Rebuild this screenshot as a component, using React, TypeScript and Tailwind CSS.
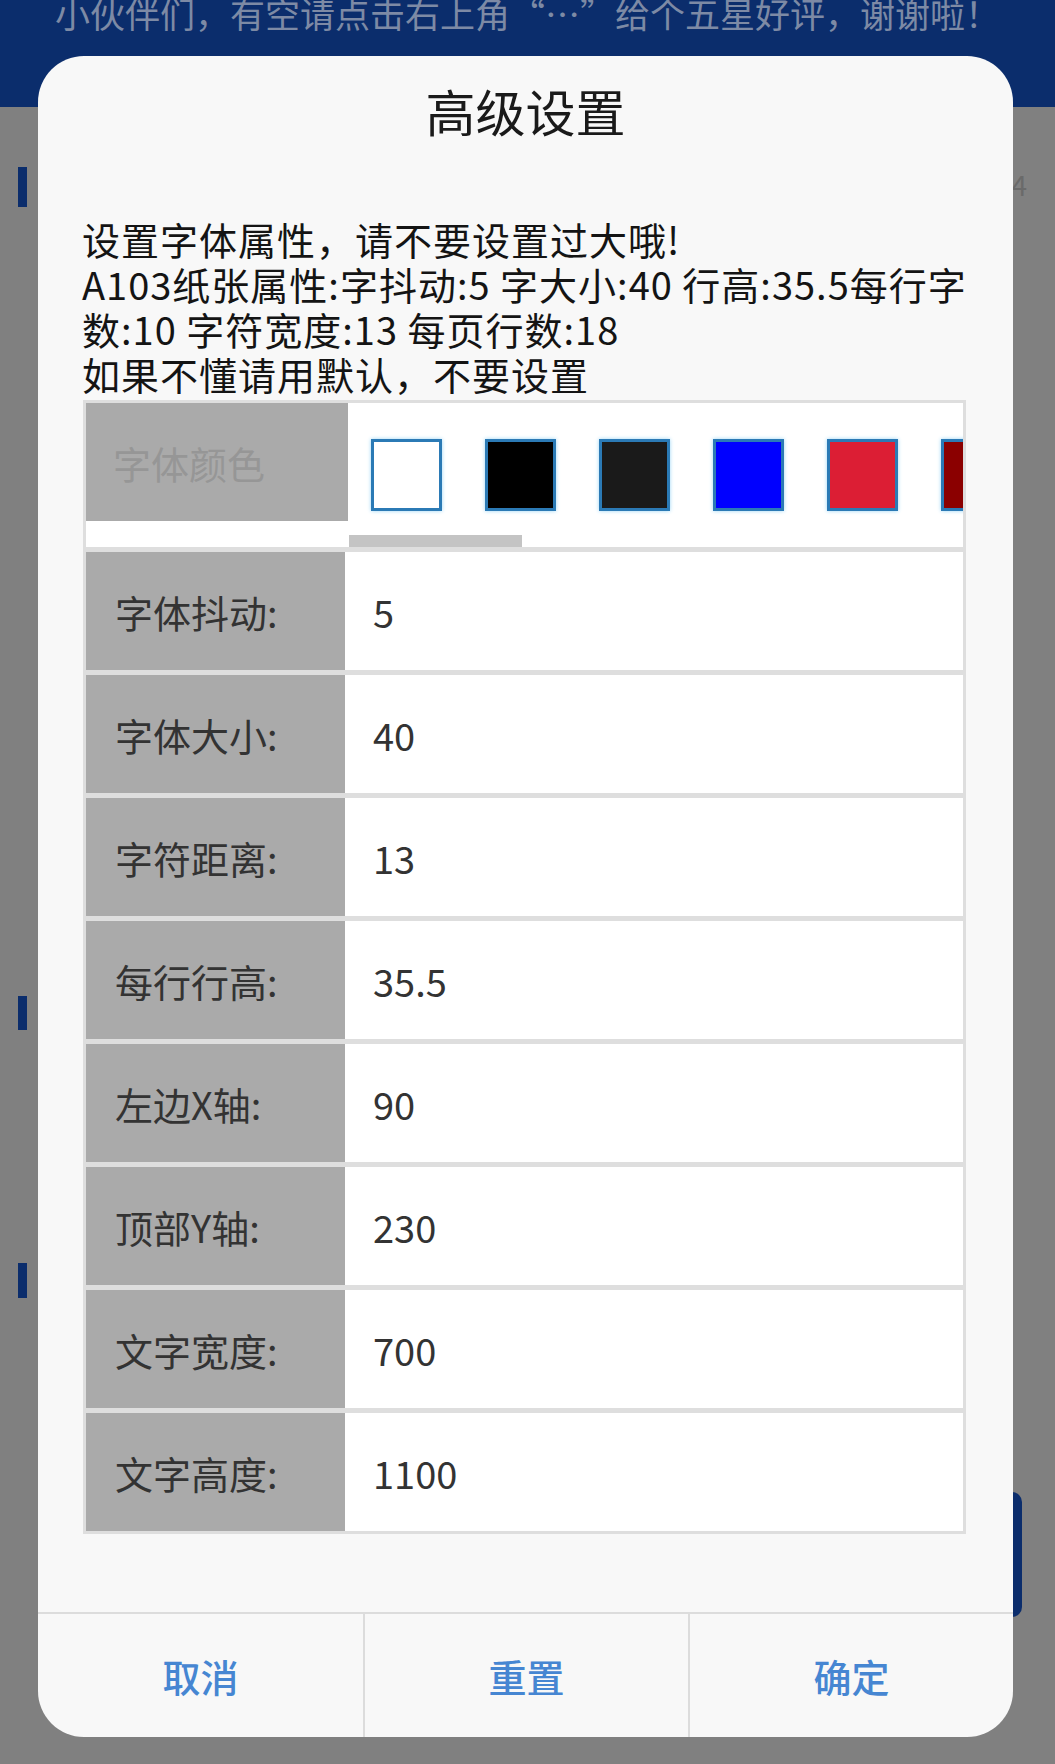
const swatches = ['#ffffff', '#000000', '#1a1a1a', '#0000ff', '#dc1e34', '#8b0000'];

const rows = [
  { label: '字体抖动:', value: '5' },
  { label: '字体大小:', value: '40' },
  { label: '字符距离:', value: '13' },
  { label: '每行行高:', value: '35.5' },
  { label: '左边X轴:', value: '90' },
  { label: '顶部Y轴:', value: '230' },
  { label: '文字宽度:', value: '700' },
  { label: '文字高度:', value: '1100' },
];

function ColorRow() {
  return (
    <div className="relative h-[144px] overflow-hidden bg-white">
      <div className="flex">
        <div className="flex h-[118px] w-[262px] shrink-0 items-center bg-[#aaaaaa] pl-[27px] text-[38px] text-[#969696]">
          字体颜色
        </div>
        <div className="flex gap-[43px] pl-[23px] pt-[36px]">
          {swatches.map((c) => (
            <div
              key={c}
              className="h-[72px] w-[71px] shrink-0 border-[3px] border-[#2b7ab5] shadow-[0_0_4px_#9ad6f6]"
              style={{ backgroundColor: c }}
            />
          ))}
        </div>
      </div>
      <div className="ml-[263px] mt-[14px] h-[12px] w-[173px] bg-[#c4c4c4]" />
    </div>
  );
}

function FieldRow({ label, value }: { label: string; value: string }) {
  return (
    <div className="flex h-[118px] bg-white text-[38px] text-[#333333]">
      <div className="flex w-[259px] shrink-0 items-center bg-[#aaaaaa] pl-[29px]">{label}</div>
      <div className="flex items-center pl-[28px]">{value}</div>
    </div>
  );
}

export default function App() {
  return (
    <div className="relative h-[1764px] w-full overflow-hidden bg-[#808080] font-['Noto_Sans_CJK_SC','Noto_Sans',sans-serif]">
      <header className="h-[107px] overflow-hidden bg-[#0b2d6c]">
        <p className="-mt-[5px] whitespace-nowrap pl-[55px] text-[35px] leading-none text-[#7d8aa5]">
          小伙伴们，有空请点击右上角“…”给个五星好评，谢谢啦！
        </p>
      </header>

      <div className="flex flex-col pl-[18px]">
        <div className="flex items-start justify-between pr-[28px]">
          <div className="mt-[60px] h-[40px] w-[9px] bg-[#0b2d6c]" />
          <span className="mt-[56px] text-[28px] text-[#6a6a6a]">4</span>
        </div>
        <div className="mt-[789px] h-[34px] w-[9px] bg-[#0b2d6c]" />
        <div className="mt-[233px] h-[35px] w-[9px] bg-[#0b2d6c]" />
        <div className="ml-[20px] mt-[194px] h-[125px] w-[984px] rounded-[10px] bg-[#0b2d6c]" />
      </div>

      <div className="absolute left-[38px] top-[56px] flex h-[1681px] w-[975px] flex-col overflow-hidden rounded-[46px] bg-[#f8f8f8]">
        <h1 className="pt-[24px] text-center text-[50px] leading-[60px] text-[#1a1a1a]">高级设置</h1>

        <div className="mt-[76px] pl-[44px] text-[38px] leading-[45px] tracking-[1px] text-[#141414]">
          <p className="whitespace-nowrap">设置字体属性，请不要设置过大哦!</p>
          <p className="whitespace-nowrap">A103纸张属性:字抖动:5 字大小:40 行高:35.5每行字</p>
          <p className="whitespace-nowrap">数:10 字符宽度:13 每页行数:18</p>
          <p className="whitespace-nowrap">如果不懂请用默认，不要设置</p>
        </div>

        <div className="ml-[45px] mr-[47px] mt-[4px] flex flex-col gap-[5px] bg-[#dedede] p-[3px]">
          <ColorRow />
          {rows.map((r) => (
            <FieldRow key={r.label} label={r.label} value={r.value} />
          ))}
        </div>

        <div className="flex-1" />

        <div className="grid h-[125px] grid-cols-3 border-t-2 border-[#dcdcdc] text-[38px] font-medium text-[#4686d2]">
          <button type="button" className="flex items-center justify-center">
            取消
          </button>
          <button type="button" className="flex items-center justify-center border-l-2 border-[#dcdcdc]">
            重置
          </button>
          <button type="button" className="flex items-center justify-center border-l-2 border-[#dcdcdc]">
            确定
          </button>
        </div>
      </div>
    </div>
  );
}
